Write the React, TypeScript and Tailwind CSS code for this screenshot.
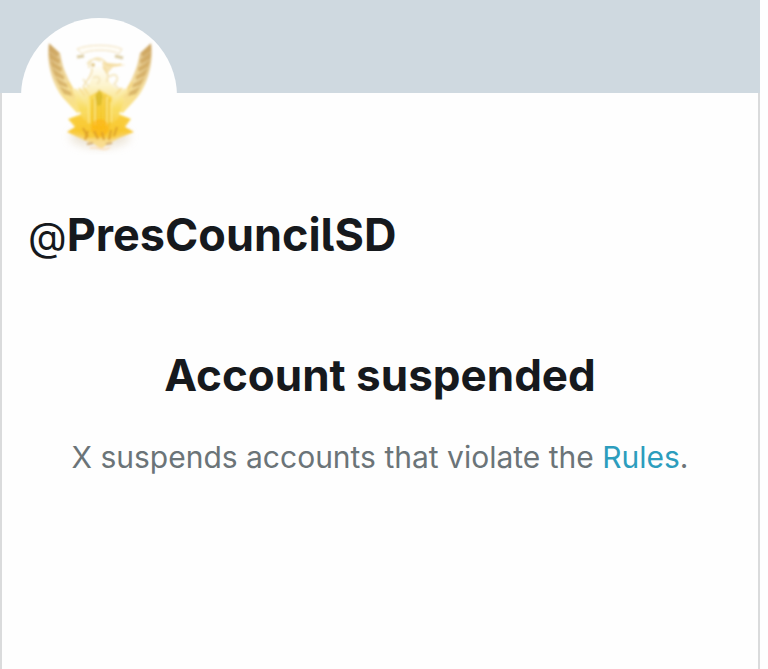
import React from 'react';

const leftFeathers = [
  'M8 14 L18 23 L16 27 L8 21 Z',
  'M8 22 L19 30 L18 34 L9 29 Z',
  'M9 30 L21 38 L20 42 L11 37 Z',
  'M11 38 L23 46 L23 50 L14 46 Z',
  'M14 47 L26 54 L27 58 L18 55 Z',
  'M18 56 L30 62 L31 66 L23 64 Z',
];

const Wing: React.FC = () => (
  <g>
    <path d="M8 13 C5 31 11 57 25 71 L36 83 L48 80 C40 68 31 59 26 46 C21 36 20 27 19 23 Z" fill="url(#wing)" opacity=".72" />
    {leftFeathers.map((d) => (
      <path key={d} d={d} fill="#c19240" opacity=".5" />
    ))}
    <path d="M30 61 L35 68 M34 59 L39 68 M27 52 L32 61" stroke="#f5d67e" strokeWidth="2" />
  </g>
);

const Emblem: React.FC = () => (
  <svg viewBox="0 0 120 130" className="w-[120px] h-[130px]" fill="none" role="img" aria-label="Golden secretary bird emblem">
    <defs>
      <linearGradient id="wing" x1="12" y1="14" x2="38" y2="82" gradientUnits="userSpaceOnUse">
        <stop stopColor="#cda35a" />
        <stop offset=".55" stopColor="#efcf78" />
        <stop offset="1" stopColor="#fbd94f" />
      </linearGradient>
      <linearGradient id="body" x1="59" y1="38" x2="59" y2="112" gradientUnits="userSpaceOnUse">
        <stop stopColor="#fffdf2" />
        <stop offset=".25" stopColor="#fdf2c4" />
        <stop offset=".55" stopColor="#f8dc5e" />
        <stop offset=".84" stopColor="#fac31a" />
        <stop offset="1" stopColor="#fadb86" />
      </linearGradient>
      <filter id="soft" x="-10%" y="-10%" width="120%" height="120%">
        <feGaussianBlur stdDeviation=".9" />
      </filter>
      <filter id="shadow" x="-30%" y="-30%" width="160%" height="160%">
        <feGaussianBlur stdDeviation="4" />
      </filter>
    </defs>
    <ellipse cx="59" cy="107" rx="30" ry="11" fill="#ddcfb4" opacity=".5" filter="url(#shadow)" />
    <g filter="url(#soft)">
      <Wing />
      <g transform="translate(118 0) scale(-1 1)">
        <Wing />
      </g>

      {/* scroll above the head */}
      <path d="M36 19 C47 14 71 14 81 19 L78 24 C70 19 48 19 41 24 Z" fill="#fffdf6" stroke="#f0dfb8" />
      <path d="M36 27 L43 26 M74 26 L82 28" stroke="#c9b477" strokeWidth="3" opacity=".65" />

      {/* shield, tail and lower scroll */}
      <path d="M31 58 C38 62 43 59 48 54 C51 45 52 43 50 37 L65 36 L68 51 C74 59 80 62 87 58 L82 74 L78 84 L90 89 L84 97 L93 102 L78 108 L67 114 L60 119 L53 114 L43 110 L26 102 L34 97 L27 89 L40 84 L36 74 Z" fill="url(#body)" opacity=".9" />
      <path d="M29 89 L40 86 L50 97 L59 100 L69 97 L79 86 L89 89 L80 96 L86 99 L73 108 L59 108 L45 108 L32 99 L37 96 Z" fill="#f9ca33" opacity=".7" />
      <path d="M47 67 L59 60 L71 67 L70 94 L59 106 L49 95 Z" fill="#f8cc1e" opacity=".6" />
      <path d="M52 69 V98 M56 63 V103 M60 62 V106 M64 65 V102 M68 69 V97" stroke="#ecb927" strokeWidth="1" />
      <path d="M48 67 V93 M54 66 V95 M66 67 V96 M70 72 V92" stroke="#fff3a6" strokeWidth="1" />
      <path d="M58 59 L54 67 L56 76 L60 75 L62 66 Z" fill="#d3b322" opacity=".65" />
      <circle cx="59" cy="98" r="9" fill="#fdb515" opacity=".65" />

      {/* head, beak and breast */}
      <path d="M48 38 C47 27 61 25 65 34 C69 36 76 36 80 34 M62 37 L67 45 L66 52 M51 38 C52 47 43 52 42 58" stroke="#f3dfaa" strokeWidth="1.5" />
      <path d="M61 32 L85 35 L72 37 L66 44 L62 38 Z" fill="#f3d894" opacity=".7" />
      <circle cx="52" cy="35" r="2" fill="#e3ca8c" />
      <path d="M46 34 L50 30 M54 29 L60 31 M52 48 C58 44 61 50 56 54 M68 47 C76 41 79 49 73 54 L79 60 M42 49 L48 57" stroke="#f3e3b8" strokeWidth="2" opacity=".8" />
      <path d="M38 58 L44 66 M43 58 L48 65 M75 64 L81 58 M82 68 L88 61" stroke="#f8df92" strokeWidth="2" />

      {/* claws */}
      <path d="M42 98 L47 107 M47 101 L44 110 M53 101 L57 109 M61 102 L63 110 M70 100 L68 110 M76 97 L73 106" stroke="#dda02c" strokeWidth="2" />
      <path d="M46 114 L52 113 M65 114 L71 113" stroke="#d3aa6c" strokeWidth="2" />
      <path d="M49 118 C56 115 62 123 69 117" stroke="#fbe2c2" strokeWidth="2" />
    </g>
  </svg>
);

const App: React.FC = () => {
  return (
    <div className="min-h-screen bg-[#fefefe] pr-2 font-['Inter',sans-serif]">
      <main className="min-h-screen border-x-2 border-[#dadbdc] bg-[#fefefe]">
        <header className="-mx-[2px] h-[93px] bg-[#cfd9e0] px-[21px] pt-[18px]">
          <div className="flex size-[156px] justify-center rounded-full bg-[#fefefe] pt-3 pl-1">
            <Emblem />
          </div>
        </header>

        <h1 className="mt-[112px] px-[26px] text-[45px] leading-[60px] font-bold text-[#16191d] [font-feature-settings:'cv05']">
          <span className="text-[40px] leading-none font-normal">@</span>PresCouncilSD
        </h1>

        <section className="mt-20 px-6 text-center">
          <h2 className="text-[44px] leading-[60px] font-bold text-[#16191d]">Account suspended</h2>
          <p className="mt-8 text-[30px] leading-10 text-[#6b7478]">
            X suspends accounts that violate the{' '}
            <a href="#rules" className="text-[#2c9dbd]">Rules</a>.
          </p>
        </section>
      </main>
    </div>
  );
};

export default App;
